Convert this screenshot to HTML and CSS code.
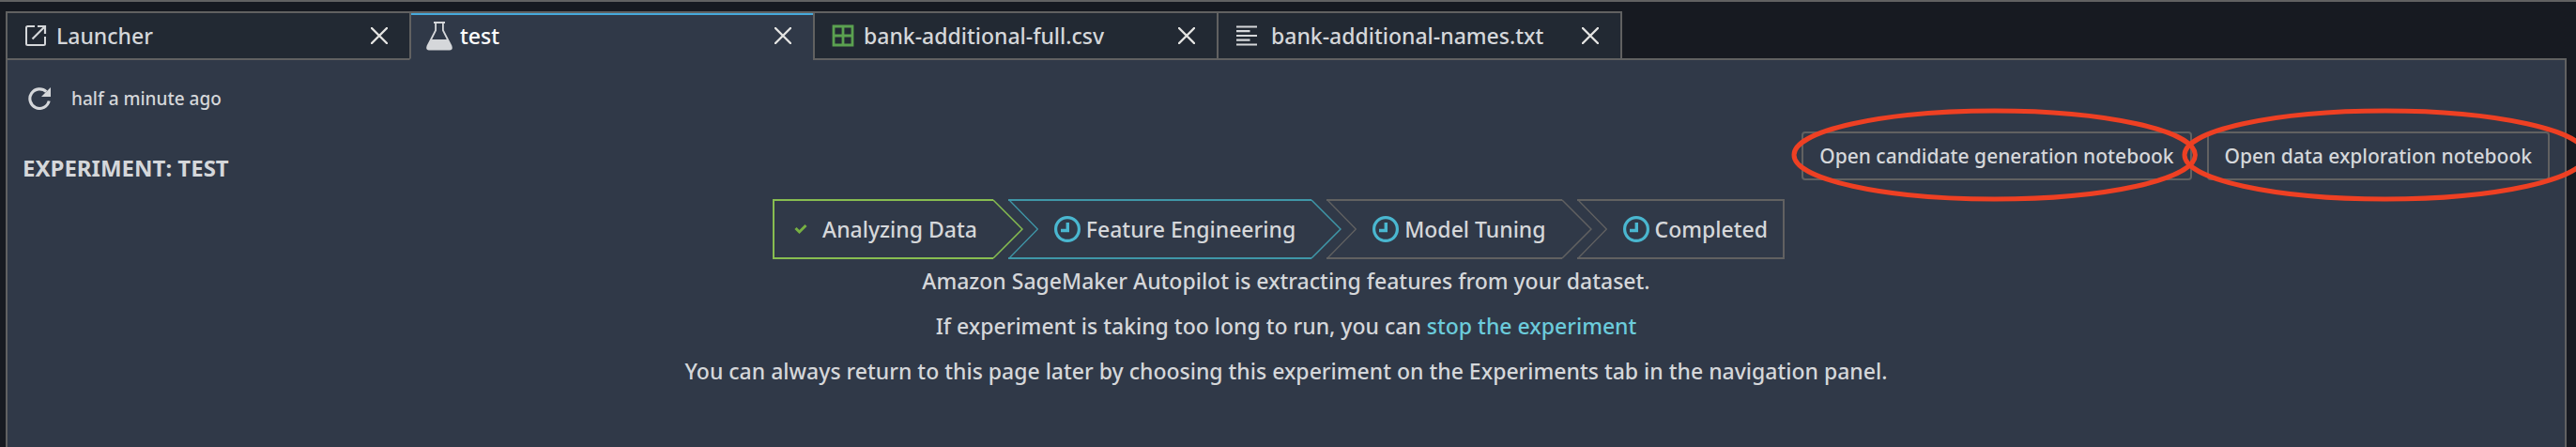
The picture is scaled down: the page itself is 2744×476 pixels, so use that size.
FILE: index.html
```
<!DOCTYPE html>
<html lang="en">
<head>
<meta charset="utf-8">
<title>Experiment: test</title>
<link rel="stylesheet" href="styles.css">
</head>
<body>
<svg class="sprite" aria-hidden="true">
  <symbol id="close" viewBox="0 0 18 18"><path d="M1 1L17 17M17 1L1 17" fill="none" stroke="currentColor" stroke-width="2.4" stroke-linecap="round"/></symbol>
  <symbol id="clock" viewBox="0 0 28 28"><circle cx="14" cy="14" r="12.4" fill="none" stroke="currentColor" stroke-width="3.2"/><path d="M14.300 7V15.500H7" fill="none" stroke="currentColor" stroke-width="3.400"/></symbol>
  <symbol id="notch" viewBox="0 0 32 64"><path d="M1 1L31.300 32L1 63" fill="none" stroke="currentColor" stroke-width="1.300"/><path d="M0 1H32M0 63H32" stroke="currentColor" stroke-width="2"/></symbol>
  <symbol id="point" viewBox="0 0 32 64"><path d="M0 1L31 32L0 63" fill="none" stroke="currentColor" stroke-width="1.500"/></symbol>
</svg>
<main class="dock">
  <div class="tabs">
    <div class="tab">
      <button class="tab-label" type="button">
        <svg class="icon" viewBox="0 0 24 24" width="24" height="24"><path d="M11 2H3.500Q2 2 2 3.500V20.500Q2 22 3.500 22H20.500Q22 22 22 20.500V13" fill="none" stroke="currentColor" stroke-width="2"/><path d="M8.500 15.500L21 3M14 2H22V10" fill="none" stroke="currentColor" stroke-width="2.200"/></svg>
        <span>Launcher</span>
      </button>
      <button class="close" type="button" aria-label="Close Launcher"><svg width="18" height="18"><use href="#close"/></svg></button>
    </div>
    <div class="tab active">
      <button class="tab-label" type="button">
        <svg class="icon" viewBox="0 0 28 32" width="28" height="32"><path d="M8 1H20V3H18.800V10L27.300 26.500Q29 31.500 25 31.500H3Q-1 31.500 .7 26.500L9.200 10V3H8ZM11 3V10.500L6.200 20H21.800L17 10.500V3Z" fill="currentColor" fill-rule="evenodd"/></svg>
        <span>test</span>
      </button>
      <button class="close" type="button" aria-label="Close test"><svg width="18" height="18"><use href="#close"/></svg></button>
    </div>
    <div class="tab">
      <button class="tab-label" type="button">
        <svg class="icon green" viewBox="0 0 24 24" width="24" height="24"><path d="M2 2H22V22H2ZM12 2V22M2 12H22" fill="none" stroke="currentColor" stroke-width="2.800"/></svg>
        <span>bank-additional-full.csv</span>
      </button>
      <button class="close" type="button" aria-label="Close bank-additional-full.csv"><svg width="18" height="18"><use href="#close"/></svg></button>
    </div>
    <div class="tab">
      <button class="tab-label wide" type="button">
        <svg class="icon" viewBox="0 0 24 24" width="24" height="24"><path d="M1 2.500H23M1 7.200H15.500M1 12H23M1 16.600H15.500M1 21.500H23" fill="none" stroke="currentColor" stroke-width="2.200"/></svg>
        <span>bank-additional-names.txt</span>
      </button>
      <button class="close" type="button" aria-label="Close bank-additional-names.txt"><svg width="18" height="18"><use href="#close"/></svg></button>
    </div>
  </div>
  <section class="panel">
    <div class="status">
      <button class="refresh" type="button" aria-label="Refresh"><svg viewBox="0 0 24 24" width="24" height="24"><path d="M22.200 14.500A10.300 10.300 0 1 1 19.300 4.700" fill="none" stroke="currentColor" stroke-width="3.100"/><path d="M24 0V10H14Z" fill="currentColor"/></svg></button>
      <span>half a minute ago</span>
    </div>
    <header class="head">
      <h1>EXPERIMENT: TEST</h1>
      <div class="actions">
        <div class="action">
          <button class="open" type="button">Open candidate generation notebook</button>
          <svg class="ring" viewBox="0 0 432 100" preserveAspectRatio="none"><ellipse cx="216" cy="50" rx="213" ry="47"/></svg>
        </div>
        <div class="action">
          <button class="open" type="button">Open data exploration notebook</button>
          <svg class="ring" viewBox="0 0 432 100" preserveAspectRatio="none"><ellipse cx="216" cy="50" rx="213" ry="47"/></svg>
        </div>
      </div>
    </header>
    <ol class="steps">
      <li class="step done first">
        <div class="step-body"><svg class="check" viewBox="0 0 14 12" width="14" height="12"><path d="M1.500 5L5.500 9L12.500 2" fill="none" stroke="currentColor" stroke-width="3"/></svg><span>Analyzing Data</span></div>
        <svg width="32" height="64"><use href="#point"/></svg>
      </li>
      <li class="step current">
        <svg width="32" height="64"><use href="#notch"/></svg>
        <div class="step-body"><svg class="clock" width="28" height="28"><use href="#clock"/></svg><span>Feature Engineering</span></div>
        <svg width="32" height="64"><use href="#point"/></svg>
      </li>
      <li class="step">
        <svg width="32" height="64"><use href="#notch"/></svg>
        <div class="step-body"><svg class="clock" width="28" height="28"><use href="#clock"/></svg><span>Model Tuning</span></div>
        <svg width="32" height="64"><use href="#point"/></svg>
      </li>
      <li class="step last">
        <svg width="32" height="64"><use href="#notch"/></svg>
        <div class="step-body"><svg class="clock" width="28" height="28"><use href="#clock"/></svg><span>Completed</span></div>
      </li>
    </ol>
    <div class="message">
      <p>Amazon SageMaker Autopilot is extracting features from your dataset.</p>
      <p>If experiment is taking too long to run, you can <a href="#stop">stop the experiment</a></p>
      <p>You can always return to this page later by choosing this experiment on the Experiments tab in the navigation panel.</p>
    </div>
  </section>
</main>
</body>
</html>
```
FILE: styles.css
```
:root {
  --line: #616161;
  --panel: #303948;
  --text: #d5d7da;
}

* { box-sizing: border-box; }

body {
  margin: 0;
  background: #171a21;
  color: var(--text);
  font: 500 23px/32px "Noto Sans", sans-serif;
  overflow-x: hidden;
}

button {
  padding: 0;
  border: 0;
  background: none;
  color: inherit;
  font: inherit;
  cursor: pointer;
}

svg { display: block; flex: none; }

.sprite { position: absolute; width: 0; height: 0; }

.dock {
  display: flex;
  flex-direction: column;
  min-height: 100vh;
  padding: 10px 10px 0 6px;
  border-top: 2px solid var(--line);
  overflow: hidden;
}

/* Tab strip */
.tabs { display: flex; z-index: 1; }

.tab {
  display: flex;
  align-items: center;
  justify-content: space-between;
  width: 432px;
  height: 52px;
  padding: 0 23px 0 18px;
  border: 2px solid var(--line);
  background: #222933;
}

.tab + .tab { margin-left: -2px; }

.tab.active {
  padding-left: 16px;
  border-bottom-color: var(--panel);
  background: var(--panel);
  box-shadow: inset 0 2px #45a9dc;
  color: #fff;
}

.tab-label { display: flex; align-items: center; gap: 10px; }
.tab-label.wide { gap: 14px; }
.tab.active .tab-label { gap: 8px; }
.icon { color: var(--text); }
.icon.green { color: #5ba150; }
.close { color: #e4e4e2; }

/* Experiment page */
.panel {
  flex: 1;
  margin-top: -2px;
  padding: 25px 16px 24px;
  border: 2px solid var(--line);
  border-bottom: 0;
  background: var(--panel);
}

.status {
  display: flex;
  align-items: center;
  gap: 22px;
  padding: 0 6px;
  font-size: 19px;
}

.head {
  display: flex;
  justify-content: space-between;
  align-items: flex-start;
  margin-top: 19px;
}

h1 {
  margin: 23px 0 0;
  font-size: 24px;
  line-height: 32px;
}

.actions { display: flex; gap: 16px; }
.action { position: relative; }

.open {
  height: 52px;
  padding: 0 17px;
  border: 2px solid var(--line);
  border-radius: 4px;
  font-size: 21px;
}

/* Hand-drawn style rings around the notebook buttons */
.ring {
  position: absolute;
  top: -25px;
  left: -11px;
  width: calc(100% + 18px);
  height: 100px;
  fill: none;
  stroke: #ee4023;
  stroke-width: 5;
  pointer-events: none;
}

.action + .action .ring {
  left: -27px;
  width: calc(100% + 68px);
}

/* Progress steps */
.steps {
  display: flex;
  justify-content: center;
  margin: 17px 16px 0 0;
  padding: 0;
  list-style: none;
}

.step { display: flex; height: 64px; color: var(--line); }
.step + .step { margin-left: -16px; }
.done { color: #87bd50; }
.current { color: #3f97a8; }

.step-body {
  display: flex;
  align-items: center;
  gap: 6px;
  padding: 0 17px;
  border: solid currentColor;
  border-width: 2px 0;
}

.step-body span { color: var(--text); }
.first .step-body { gap: 16px; padding-left: 21px; border-left-width: 2px; }
.last .step-body { padding-right: 16px; border-right-width: 2px; }
.check { color: #77b043; }
.clock { color: #4ab7d0; }

.message { text-align: center; }
.message p { margin: 16px 0; }
.message p:first-child { margin-top: 7px; }
.message a { color: #6bcbdb; text-decoration: none; }
```
